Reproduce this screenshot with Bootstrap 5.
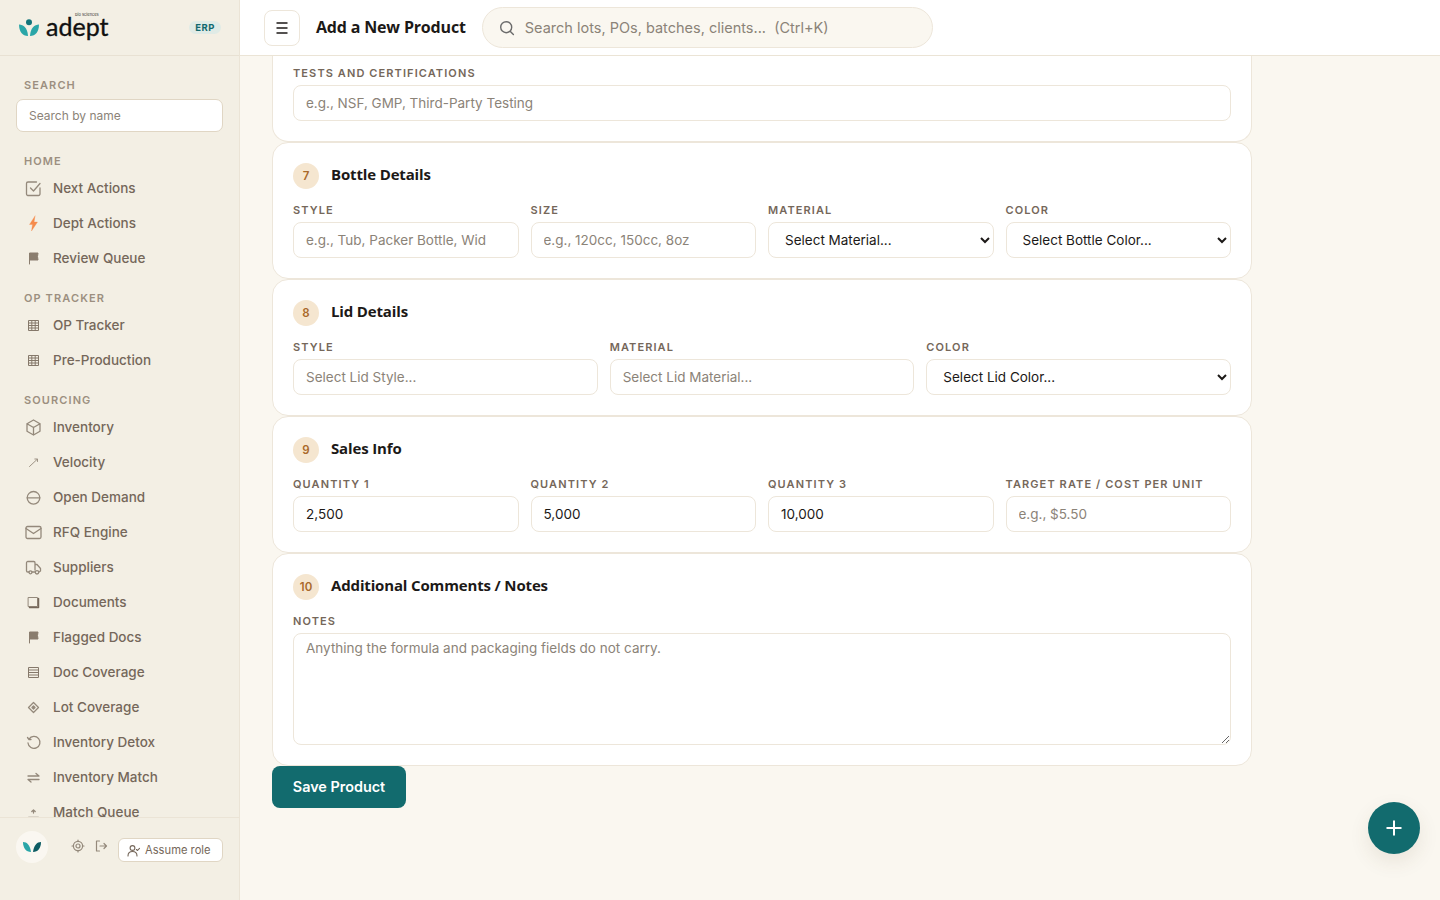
<!DOCTYPE html>
<html lang="en">
<head>
<meta charset="UTF-8" />
<title>Add a New Product</title>
<link href="https://cdn.jsdelivr.net/npm/bootstrap@5.3.0/dist/css/bootstrap.min.css" rel="stylesheet" />
<style>
  html, body { height: 100%; overflow: hidden; }
  body { font-family: Inter, "Liberation Sans", sans-serif; background: #faf7f0; color: #1c1917; font-size: 14px; }
  .app-shell { height: 900px; }
  .side-bar { width: 240px; flex: 0 0 240px; background: #f3efe4; border-right: 1px solid #ebe4d6; height: 900px; }
  .side-brand { height: 56px; flex: 0 0 56px; padding: 0 18px 0 19px; border-bottom: 1px solid #e8e1d3; position: relative; }
  .brand-word { font-family: Lato, sans-serif; font-size: 25px; line-height: 16px; letter-spacing: 0; color: #111; margin-left: 7px; position: relative; top: -2px; -webkit-text-stroke: .35px #111; }
  .brand-sub { position: absolute; left: 75px; top: 12px; font-size: 4px; line-height: 5px; color: #333; white-space: nowrap; }
  .erp-tag { font-size: 9.5px; font-weight: 700; letter-spacing: .5px; color: #12696e; background: #e0ebe6; border-radius: 10px; padding: 1px 6px; line-height: 11px; }
  .side-scroll { flex: 1 1 auto; overflow: hidden; padding: 22px 16px 0; }
  .side-head { font-size: 11px; font-weight: 600; letter-spacing: 1.1px; color: #9c8f80; line-height: 14px; padding-left: 8px; text-transform: uppercase; margin-bottom: 3px; }
  .side-find { display: block; width: 207px; height: 33px; margin: 7px 0 22px; border: 1px solid #e0d6c4; border-radius: 7px; padding: 0 12px; font-size: 12px; background: #fff; }
  .side-find::placeholder { color: #8b8378; }
  .side-group { margin-bottom: 15px; }
  .side-link { display: flex; align-items: center; height: 35px; padding-left: 9px; color: #75675a; font-size: 13.5px; font-weight: 500; text-decoration: none; }
  .side-link svg { width: 17px; height: 17px; flex: 0 0 17px; margin-right: 11px; fill: none; stroke: #94897b; stroke-width: 1.3; stroke-linecap: round; stroke-linejoin: round; }
  .side-foot { flex: 0 0 83px; height: 83px; border-top: 1px solid #ebe4d6; padding: 13px 16px 0 16px; }
  .foot-logo { width: 32px; height: 32px; border-radius: 50%; background: #faf7f1; margin-right: 23px; }
  .foot-ico { width: 14px; height: 14px; fill: none; stroke: #94897b; stroke-width: 1.2; stroke-linecap: round; stroke-linejoin: round; margin-right: 9px; }
  .foot-icons { margin-top: 8px; }
  .assume-btn { display: flex; align-items: center; height: 24px; width: 105px; background: #fff; border: 1px solid #e0d6c4; border-radius: 6px; color: #75675a; font-size: 11.2px; padding: 0 8px; margin-left: auto; margin-top: 7px; white-space: nowrap; }
  .assume-btn svg { width: 13px; height: 13px; margin-right: 5px; fill: none; stroke: #75675a; stroke-width: 1.1; stroke-linecap: round; stroke-linejoin: round; }
  .main-pane { flex: 1 1 auto; height: 900px; min-width: 0; overflow: hidden; position: relative; }
  .top-strip { height: 56px; background: #fff; border-bottom: 1px solid #ebe4d6; padding-left: 24px; }
  .menu-btn { width: 36px; height: 36px; background: #fff; border: 1px solid #ede6da; border-radius: 8px; padding: 0; margin-right: 16px; }
  .page-name { font-family: "Open Sans", sans-serif; font-weight: 700; font-size: 16px; letter-spacing: -.17px; color: #1c1917; margin: 0 16px 0 0; white-space: nowrap; }
  .top-search { width: 451px; height: 41px; background: #faf7f0; border: 1px solid #ede6da; border-radius: 21px; padding: 0 16px; color: #8b8378; font-size: 14.5px; }
  .top-search svg { width: 16px; height: 16px; margin-right: 10px; fill: none; stroke: #6b6b6b; stroke-width: 1.4; stroke-linecap: round; }
  .page-body { width: 980px; margin-left: 32px; }
  .form-block { background: #fff; border: 1px solid #ede6da; border-radius: 16px; padding: 20px; height: 137px; }
  .form-block.cut-top { border-top: 0; border-radius: 0 0 16px 16px; padding-top: 10px; height: 86px; }
  .form-block.tall { height: 213px; }
  .block-head { height: 26px; margin: 0 0 14px; }
  .step-num { width: 26px; height: 26px; border-radius: 50%; background: #f5e6d0; color: #a9692a; font-size: 11.5px; font-weight: 600; margin-right: 12px; padding-top: 2px; }
  .block-title { font-family: "Open Sans", sans-serif; font-weight: 700; font-size: 15px; letter-spacing: -.15px; color: #1c1917; margin: 0; position: relative; top: -2px; }
  .field-label { display: block; font-size: 11px; font-weight: 600; letter-spacing: 1.1px; line-height: 14px; margin-bottom: 5px; color: #75675a; text-transform: uppercase; white-space: nowrap; }
  .field-input { height: 36px; border: 1px solid #ede6da; border-radius: 8px; padding: 0 12px 1px; font-size: 13.5px; color: #1c1917; box-shadow: none; }
  .field-input::placeholder { color: #8b8378; opacity: 1; }
  textarea.field-input { height: 112px; padding: 4px 12px; }
  select.field-input { padding: 0 12px 1px; appearance: auto; background-image: none; background-color: #fff; color: #1c1917; }
  .grid-four { display: grid; grid-template-columns: repeat(4, 1fr); gap: 12px; }
  .grid-three { display: grid; grid-template-columns: repeat(3, 1fr); gap: 12px; }
  .save-btn { width: 134px; height: 42px; background: #126b6e; border: 0; border-radius: 8px; color: #fff; font-size: 14.4px; font-weight: 600; padding: 0; display: block; }
  .plus-fab { position: absolute; right: 20px; bottom: 46px; width: 52px; height: 52px; border-radius: 50%; background: #126b6e; border: 0; padding: 0; box-shadow: 0 8px 20px rgba(90,70,40,.1); }
</style>
</head>
<body>
<div class="app-shell d-flex">
  <aside class="side-bar d-flex flex-column">
    <div class="side-brand d-flex align-items-center">
      <svg width="20" height="18" viewBox="0 0 20 18"><circle cx="10" cy="3.200" r="3" fill="#12747a"/><path d="M0 5.500c4.500.2 8.500 3 9 11.500C3.500 17 0 12.500 0 5.500z" fill="#2aa6a8"/><path d="M20 5.500c-4.500.2-8.500 3-9 11.500 5.500 0 9-4.500 9-11.500z" fill="#2aa6a8"/></svg>
      <span class="brand-word">adept</span>
      <span class="brand-sub">bio sciences</span>
      <span class="erp-tag ms-auto">ERP</span>
    </div>
    <div class="side-scroll">
      <div class="side-head">Search</div>
      <input class="side-find" placeholder="Search by name" />
      <div class="side-group">
        <div class="side-head">Home</div>
        <a class="side-link" href="#"><svg viewBox="0 0 17 17"><path d="M15 8v6a1.500 1.500 0 0 1-1.500 1.500h-11A1.500 1.500 0 0 1 1.500 14V3.500A1.500 1.500 0 0 1 3 2h8.500"/><path d="M5.500 8l3 3L15 3.500"/></svg>Next Actions</a>
        <a class="side-link" href="#"><svg viewBox="0 0 17 17"><path d="M10 1L4.500 9.500h3L6.500 16l6-9h-3.300z" style="fill:#f58b4c;stroke:#f58b4c;stroke-width:.3"/></svg>Dept Actions</a>
        <a class="side-link" href="#"><svg viewBox="0 0 17 17"><path d="M4.500 14V3h8.500l-.5 3.500.5 3.500H4.500" style="fill:#8a7d6e;stroke:#8a7d6e;stroke-width:1"/></svg>Review Queue</a>
      </div>
      <div class="side-group">
        <div class="side-head">OP Tracker</div>
        <a class="side-link" href="#"><svg viewBox="0 0 17 17"><path d="M3.500 3.500h10v10h-10zM3.500 6h10M3.500 8.500h10M3.500 11h10M6.800 3.500v10M10.200 3.500v10" style="stroke:#85786a;stroke-width:1;stroke-linecap:butt"/></svg>OP Tracker</a>
        <a class="side-link" href="#"><svg viewBox="0 0 17 17"><path d="M3.500 3.500h10v10h-10zM3.500 6h10M3.500 8.500h10M3.500 11h10M6.800 3.500v10M10.200 3.500v10" style="stroke:#85786a;stroke-width:1;stroke-linecap:butt"/></svg>Pre-Production</a>
      </div>
      <div class="side-group">
        <div class="side-head">Sourcing</div>
        <a class="side-link" href="#"><svg viewBox="0 0 17 17"><path d="M8.500 1l6.500 3.700v7.600L8.500 16 2 12.300V4.700zM2 4.700l6.500 3.800 6.500-3.800M8.500 8.500V16"/></svg>Inventory</a>
        <a class="side-link" href="#"><svg viewBox="0 0 17 17"><path d="M4.500 12.500l7.500-7M9.800 5H12.500v2.500" style="stroke-width:.9"/></svg>Velocity</a>
        <a class="side-link" href="#"><svg viewBox="0 0 17 17"><circle cx="8.500" cy="8.800" r="6.300"/><path d="M2.200 8.800h12.600"/></svg>Open Demand</a>
        <a class="side-link" href="#"><svg viewBox="0 0 17 17"><rect x="1" y="2.500" width="15" height="12" rx="1.500"/><path d="M1 4.500l7.500 5 7.500-5"/></svg>RFQ Engine</a>
        <a class="side-link" href="#"><svg viewBox="0 0 17 17"><path d="M4 13H2.800A1.300 1.300 0 0 1 1.500 11.700V3.800A1.300 1.300 0 0 1 2.800 2.500h6A1.300 1.300 0 0 1 10 3.800V11M10 5.500h2l3.500 4v2.500l-1.500 1M7 13h3"/><circle cx="5.500" cy="13.300" r="1.500"/><circle cx="12" cy="13.300" r="1.700"/></svg>Suppliers</a>
        <a class="side-link" href="#"><svg viewBox="0 0 17 17"><path d="M3.500 3.500h9v9h-9z" style="stroke-width:1"/><path d="M13.500 4.500v9h-9" style="stroke:#75675a;stroke-width:1.500"/></svg>Documents</a>
        <a class="side-link" href="#"><svg viewBox="0 0 17 17"><path d="M4.500 14V3h8.500l-.5 3.500.5 3.500H4.500" style="fill:#8a7d6e;stroke:#8a7d6e;stroke-width:1"/></svg>Flagged Docs</a>
        <a class="side-link" href="#"><svg viewBox="0 0 17 17"><path d="M3.500 3.500h10v10h-10zM3.500 6h10M3.500 8.500h10M3.500 11h10" style="stroke:#85786a;stroke-width:1;stroke-linecap:butt"/></svg>Doc Coverage</a>
        <a class="side-link" href="#"><svg viewBox="0 0 17 17"><path d="M8.500 3.500l5 5-5 5-5-5z"/><path d="M8.500 7l1.500 1.500-1.500 1.500L7 8.500z" style="fill:#94897b"/></svg>Lot Coverage</a>
        <a class="side-link" href="#"><svg viewBox="0 0 17 17"><path d="M4 5a6 6 0 1 1-1 4M2.500 3.500l1.500 2h2"/></svg>Inventory Detox</a>
        <a class="side-link" href="#"><svg viewBox="0 0 17 17"><path d="M3 7h11l-3-2.500M14 10.500H3l3 2.500"/></svg>Inventory Match</a>
        <a class="side-link" href="#"><svg viewBox="0 0 17 17"><path d="M3.500 13.500h10M8.500 6v3M6.800 7.500l1.700-1.500 1.700 1.500"/></svg>Match Queue</a>
      </div>
    </div>
    <div class="side-foot d-flex align-items-start">
      <div class="foot-logo d-flex align-items-center justify-content-center">
        <svg width="18" height="12" viewBox="0 0 18 12"><path d="M0 1c4 0 7 3 8 10-5 0-8-4-8-10z" fill="#2aa6a8"/><path d="M18 1c-4 0-7 3-8 10 5 0 8-4 8-10z" fill="#0d5c63"/></svg>
      </div>
      <div class="foot-icons d-flex align-items-center">
        <svg class="foot-ico" viewBox="0 0 14 14"><circle cx="7" cy="7" r="2"/><circle cx="7" cy="7" r="4.600"/><path d="M7 1v1.400M7 11.600V13M1 7h1.400M11.600 7H13"/></svg>
        <svg class="foot-ico" viewBox="0 0 14 14"><path d="M5.500 2H2.500v10h3M6 7h6.500M10 4.500L12.500 7 10 9.500"/></svg>
      </div>
      <div class="assume-btn"><svg viewBox="0 0 13 13"><circle cx="5.500" cy="4" r="2.400"/><path d="M1 12c0-3 2-4.500 4.500-4.500S10 9 10 12M9.500 5.500l1 1 2-2.200"/></svg>Assume role</div>
    </div>
  </aside>

  <main class="main-pane">
    <header class="top-strip d-flex align-items-center">
      <button class="menu-btn d-flex align-items-center justify-content-center" type="button" aria-label="Menu">
        <svg width="14" height="12" viewBox="0 0 14 12" fill="none" stroke="#1c1917" stroke-width="1.300"><path d="M1.500 1h11M1.500 6h11M1.500 11h11"/></svg>
      </button>
      <h1 class="page-name">Add a New Product</h1>
      <div class="top-search d-flex align-items-center">
        <svg viewBox="0 0 16 16"><circle cx="7.200" cy="7.200" r="5.500"/><path d="M11.400 11.400l3 3"/></svg>
        Search lots, POs, batches, clients... &nbsp;(Ctrl+K)
      </div>
    </header>

    <div class="page-body">
      <section class="form-block cut-top">
        <label class="field-label">Tests and Certifications</label>
        <input class="form-control field-input" placeholder="e.g., NSF, GMP, Third-Party Testing" />
      </section>

      <section class="form-block">
        <div class="block-head d-flex align-items-center">
          <span class="step-num d-flex align-items-center justify-content-center">7</span>
          <h2 class="block-title">Bottle Details</h2>
        </div>
        <div class="grid-four">
          <div><label class="field-label">Style</label><input class="form-control field-input" placeholder="e.g., Tub, Packer Bottle, Wid" /></div>
          <div><label class="field-label">Size</label><input class="form-control field-input" placeholder="e.g., 120cc, 150cc, 8oz" /></div>
          <div><label class="field-label">Material</label><select class="form-select field-input"><option>Select Material...</option></select></div>
          <div><label class="field-label">Color</label><select class="form-select field-input"><option>Select Bottle Color...</option></select></div>
        </div>
      </section>

      <section class="form-block">
        <div class="block-head d-flex align-items-center">
          <span class="step-num d-flex align-items-center justify-content-center">8</span>
          <h2 class="block-title">Lid Details</h2>
        </div>
        <div class="grid-three">
          <div><label class="field-label">Style</label><input class="form-control field-input" placeholder="Select Lid Style..." /></div>
          <div><label class="field-label">Material</label><input class="form-control field-input" placeholder="Select Lid Material..." /></div>
          <div><label class="field-label">Color</label><select class="form-select field-input"><option>Select Lid Color...</option></select></div>
        </div>
      </section>

      <section class="form-block">
        <div class="block-head d-flex align-items-center">
          <span class="step-num d-flex align-items-center justify-content-center">9</span>
          <h2 class="block-title">Sales Info</h2>
        </div>
        <div class="grid-four">
          <div><label class="field-label">Quantity 1</label><input class="form-control field-input" value="2,500" /></div>
          <div><label class="field-label">Quantity 2</label><input class="form-control field-input" value="5,000" /></div>
          <div><label class="field-label">Quantity 3</label><input class="form-control field-input" value="10,000" /></div>
          <div><label class="field-label">Target Rate / Cost Per Unit</label><input class="form-control field-input" placeholder="e.g., $5.50" /></div>
        </div>
      </section>

      <section class="form-block tall">
        <div class="block-head d-flex align-items-center">
          <span class="step-num d-flex align-items-center justify-content-center">10</span>
          <h2 class="block-title">Additional Comments / Notes</h2>
        </div>
        <label class="field-label">Notes</label>
        <textarea class="form-control field-input" placeholder="Anything the formula and packaging fields do not carry."></textarea>
      </section>

      <button class="save-btn" type="button">Save Product</button>
    </div>

    <button class="plus-fab d-flex align-items-center justify-content-center" type="button" aria-label="Add">
      <svg width="18" height="18" viewBox="0 0 18 18" fill="none" stroke="#fff" stroke-width="2"><path d="M9 1.500v15M1.500 9h15"/></svg>
    </button>
  </main>
</div>
<script src="https://cdn.jsdelivr.net/npm/bootstrap@5.3.0/dist/js/bootstrap.bundle.min.js"></script>
</body>
</html>
